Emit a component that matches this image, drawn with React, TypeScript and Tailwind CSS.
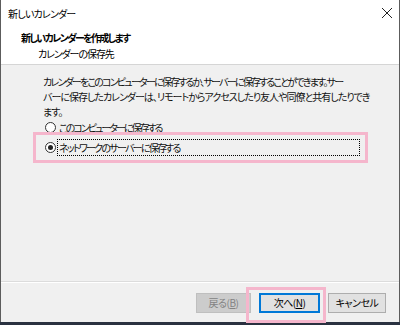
import React from "react";

const FONT = {
  fontFamily: '"Noto Sans CJK JP", "Noto Sans", sans-serif',
};

function Radio({ checked }: { checked?: boolean }) {
  return (
    <span className="flex h-[11px] w-[11px] shrink-0 items-center justify-center rounded-full border border-[#333333] bg-white">
      {checked && <span className="h-[5px] w-[5px] rounded-full bg-[#222222]" />}
    </span>
  );
}

export default function App() {
  return (
    <div
      className="relative h-[325px] w-[400px] overflow-hidden bg-[#2a3140] text-[10px] text-black [font-feature-settings:'palt']"
      style={FONT}
    >
      <div className="flex h-[322px] flex-col border-x border-[#5c5c5c] bg-[#f0f0f0]">
        {/* title bar + wizard header */}
        <div className="flex h-[64px] flex-col bg-white">
          <div className="flex h-[27px] items-center justify-between pl-[7px] pr-[6px]">
            <span className="leading-none tracking-[-0.8px]">新しいカレンダー</span>
            <svg width="12" height="12" viewBox="0 0 12 12" className="mt-[-1px]">
              <path d="M1 1L11 11M11 1L1 11" stroke="#222" strokeWidth="1" />
            </svg>
          </div>
          <div className="pl-[20px] pt-[3px] font-bold leading-[15px] tracking-[-1.7px]">新しいカレンダーを作成します</div>
          <div className="pl-[37px] pt-[1px] leading-[15px] tracking-[-1.1px]">カレンダーの保存先</div>
        </div>
        <div className="h-px bg-[#d5d5d5]" />

        {/* body */}
        <div className="flex flex-1 flex-col pl-[42px] pt-[9px] text-[#111111]">
          <p className="whitespace-nowrap leading-[15px]">
            <span className="tracking-[-1.8px]">
              カレンダーをこのコンピューターに保存するか、サーバーに保存することができます。サー
            </span>
            <br />
            <span className="tracking-[-1px]">
              バーに保存したカレンダーは、リモートからアクセスしたり友人や同僚と共有したりでき
            </span>
            <br />
            <span className="tracking-[-1px]">ます。</span>
          </p>
          <div className="flex flex-col gap-[3px] pl-[2px]">
            <label className="flex h-[17px] items-center gap-[3px]">
              <Radio />
              <span className="leading-none tracking-[-2px]">このコンピューターに保存する</span>
            </label>
            <label className="flex h-[17px] items-center gap-[1px]">
              <Radio checked />
              <span className="flex h-[17px] w-[303px] items-center border border-dotted border-black pl-[1px] leading-none tracking-[-1.75px]">
                ネットワークのサーバーに保存する
              </span>
            </label>
          </div>
        </div>

        {/* footer */}
        <div className="h-px bg-[#dcdcdc]" />
        <div className="h-px bg-white" />
        <div className="flex h-[39px] items-start justify-end gap-[8px] pr-[13px] pt-[10px] tracking-[-0.5px]">
          <button className="h-[20px] w-[55px] border border-[#bfbfbf] bg-[#cccccc] text-[10px] leading-none text-[#838383]">
            戻る(<span className="underline">B</span>)
          </button>
          <button className="h-[20px] w-[61px] border-2 border-[#0078d7] bg-[#e1e1e1] text-[10px] leading-none">
            次へ(<span className="underline">N</span>)
          </button>
          <button className="h-[20px] w-[58px] border border-[#adadad] bg-[#e1e1e1] text-[10px] leading-none">
            キャンセル
          </button>
        </div>
      </div>

      {/* pink annotation frames */}
      <div className="absolute left-[33px] top-[132px] h-[31px] w-[335px] border-[3px] border-[#f5b6cc]" />
      <div className="absolute left-[246px] top-[287px] h-[36px] w-[80px] border-[3px] border-[#f5b6cc]" />
    </div>
  );
}
